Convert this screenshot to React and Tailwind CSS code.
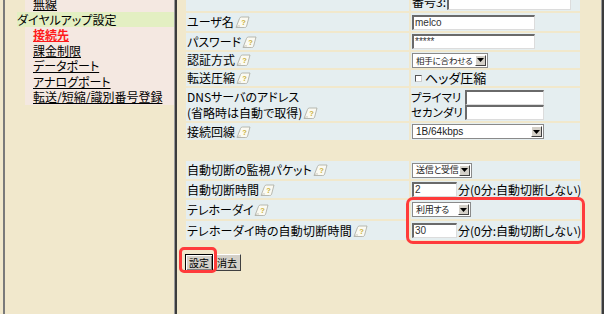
import React from "react";

const Help = () => (
  <svg width="15" height="12" viewBox="0 0 15 12" className="inline-block ml-[1px] align-[-1px] shrink-0">
    <path d="M1 11.5 L4.5 2.5 Q5 1 6.5 1 L14 1 L11.5 10.5 Q11 11.5 9.5 11.5 Z" fill="#fbfaf2" stroke="#a8a8a0" strokeWidth="0.8" />
    <path d="M1 11.5 Q3 9 5 10" fill="none" stroke="#b8b8b0" strokeWidth="0.7" />
    <text x="6.3" y="9" fontSize="7.5" fill="#c9b23c" fontFamily="Liberation Sans, sans-serif" fontWeight="bold">?</text>
  </svg>
);

const TextInput = ({ w, value = "" }) => (
  <div className={`shrink-0 h-[15px] ${w} bg-white border-t-2 border-l-2 border-b border-r border-t-[#6a6a6a] border-l-[#6a6a6a] border-b-[#dcdcdc] border-r-[#dcdcdc] text-[10px] leading-[12px] pl-[1px] text-[#333] font-['Liberation_Sans',sans-serif] whitespace-nowrap overflow-hidden`}>
    {value}
  </div>
);

const Select = ({ w, value, size = "text-[9px] tracking-[-0.3px]" }) => (
  <div className={`shrink-0 h-[15px] ${w} bg-white border border-[#8a8a8a] flex items-center justify-between pl-[3px] pr-[1px] text-[#222] whitespace-nowrap overflow-hidden`}>
    <span className={`leading-[12px] ${size}`}>{value}</span>
    <span className="shrink-0 w-[11px] h-[11px] bg-[#d4d0c8] border border-t-white border-l-white border-b-[#404040] border-r-[#404040] flex items-center justify-center">
      <svg width="7" height="4" viewBox="0 0 7 4"><path d="M0 0 L7 0 L3.5 4 Z" fill="#000" /></svg>
    </span>
  </div>
);

const Row = ({ h, label, children }) => (
  <div className={`flex gap-[2px] ${h}`}>
    <div className="w-[223px] shrink-0 bg-[#e5eef0] flex items-center pl-[1px] whitespace-nowrap">{label}</div>
    <div className="flex-1 bg-[#e5eef0] flex items-center pl-[1px] whitespace-nowrap">{children}</div>
  </div>
);

const menu = [
  { t: "課金制限" },
  { t: "データポート" },
  { t: "アナログポート" },
  { t: "転送/短縮/識別番号登録" },
];

export default function App() {
  return (
    <div className="w-[604px] h-[314px] flex overflow-hidden bg-[#f1e8cc] text-black text-[12px] font-['Noto_Sans_CJK_JP','Noto_Sans_CJK_SC',sans-serif] [font-feature-settings:'palt']">
      {/* left frame */}
      <div className="w-[3px] shrink-0" />
      <div className="w-[2px] shrink-0 bg-[#7a7a7a]" />
      <div className="w-[169px] shrink-0 flex flex-col whitespace-nowrap">
        <div className="-mt-[4px] h-[15.5px] ml-[20px] pl-[8px] bg-[#f4e8e1] leading-[15.5px]">
          <span className="underline">無線</span>
        </div>
        <div className="h-[15.5px] ml-[12px] bg-[#e3efc2] leading-[15.5px]">ダイヤルアップ設定</div>
        <div className="h-[15.5px] ml-[20px] pl-[8px] bg-[#f4e8e1] leading-[15.5px]">
          <span className="underline text-[#ff1a1a] font-bold">接続先</span>
        </div>
        {menu.map((m) => (
          <div key={m.t} className="h-[15.5px] ml-[20px] pl-[8px] bg-[#f4e8e1] leading-[15.5px]">
            <span className="underline">{m.t}</span>
          </div>
        ))}
      </div>
      <div className="w-[1px] shrink-0 bg-[#9a9a9a]" />
      <div className="w-[2px] shrink-0 bg-[#3c3c3c]" />

      {/* right frame */}
      <div className="relative w-[424px] shrink-0 pl-[9px] pr-[21px] flex flex-col">
        <div className="flex flex-col gap-[2px] -mt-[7px]">
          <Row h="h-[18px]" label="">
            <span className="mr-[1px]">番号3:</span>
            <TextInput w="w-[124px]" />
          </Row>
          <Row h="h-[18px]" label={<><span>ユーザ名</span><Help /></>}>
            <TextInput w="w-[123px]" value="melco" />
          </Row>
          <Row h="h-[17px]" label={<><span>パスワード</span><Help /></>}>
            <TextInput w="w-[123px]" value="*****" />
          </Row>
          <Row h="h-[16px]" label={<><span>認証方式</span><Help /></>}>
            <Select w="w-[76px]" value="相手に合わせる" size="text-[8.5px] tracking-[-0.2px]" />
          </Row>
          <Row h="h-[16px]" label={<><span>転送圧縮</span><Help /></>}>
            <span className="shrink-0 ml-[3px] mr-[3px] w-[7px] h-[7px] bg-white border-t border-l border-[#555] border-b border-r border-b-[#ccc] border-r-[#ccc]" />
            <span className="text-[13px] leading-[14px]">ヘッダ圧縮</span>
          </Row>
          <div className="flex gap-[2px] h-[33px]">
            <div className="w-[223px] shrink-0 bg-[#e5eef0] flex flex-col justify-center pl-[1px] leading-[16px] whitespace-nowrap">
              <span>DNSサーバのアドレス</span>
              <span className="flex items-center">(省略時は自動で取得)<Help /></span>
            </div>
            <div className="flex-1 bg-[#e5eef0] flex flex-col justify-center text-[11.5px] leading-[15px] whitespace-nowrap">
              <div className="flex items-center"><span className="w-[54px] shrink-0">プライマリ</span><TextInput w="w-[79px]" /></div>
              <div className="flex items-center"><span className="w-[54px] shrink-0">セカンダリ</span><TextInput w="w-[79px]" /></div>
            </div>
          </div>
          <Row h="h-[17px]" label={<><span>接続回線</span><Help /></>}>
            <Select w="w-[132px]" value="1B/64kbps" size="text-[10px] font-['Liberation_Sans',sans-serif]" />
          </Row>
        </div>
        <div className="flex flex-col gap-[2px] mt-[21px]">
          <Row h="h-[18px]" label={<><span>自動切断の監視パケット</span><Help /></>}>
            <Select w="w-[60px]" value="送信と受信" />
          </Row>
          <Row h="h-[17px]" label={<><span>自動切断時間</span><Help /></>}>
            <TextInput w="w-[45px]" value="2" />
            <span className="ml-[1px] text-[12px] leading-[14px]">分(0分:自動切断しない)</span>
          </Row>
          <Row h="h-[19px]" label={<><span>テレホーダイ</span><Help /></>}>
            <Select w="w-[59px]" value="利用する" />
          </Row>
          <Row h="h-[19px]" label={<><span className="tracking-[0.2px]">テレホーダイ時の自動切断時間</span><Help /></>}>
            <TextInput w="w-[45px]" value="30" />
            <span className="ml-[1px] text-[12px] leading-[14px]">分(0分:自動切断しない)</span>
          </Row>
        </div>
        <div className="flex mt-[14px] ml-[-1px]">
          <button className="h-[17px] px-[3px] bg-[#d4d0c8] text-[10px] leading-[13px] border border-black shadow-[inset_1px_1px_0_#fff,inset_-1px_-1px_0_#808080]">設定</button>
          <button className="h-[17px] px-[3px] bg-[#d4d0c8] text-[10px] leading-[13px] border border-t-white border-l-white border-b-[#404040] border-r-[#404040]">消去</button>
        </div>

        {/* annotation boxes */}
        <div className="absolute left-[229px] top-[197px] w-[179px] h-[47px] border-[3px] border-[#ff3b3b] rounded-[7px]" />
        <div className="absolute left-[2px] top-[247px] w-[38px] h-[26px] border-[3px] border-[#ff3b3b] rounded-[5px]" />
      </div>
      <div className="w-[1px] shrink-0 bg-[#9a9a9a]" />
      <div className="w-[2px] shrink-0 bg-[#3c3c3c]" />
    </div>
  );
}
